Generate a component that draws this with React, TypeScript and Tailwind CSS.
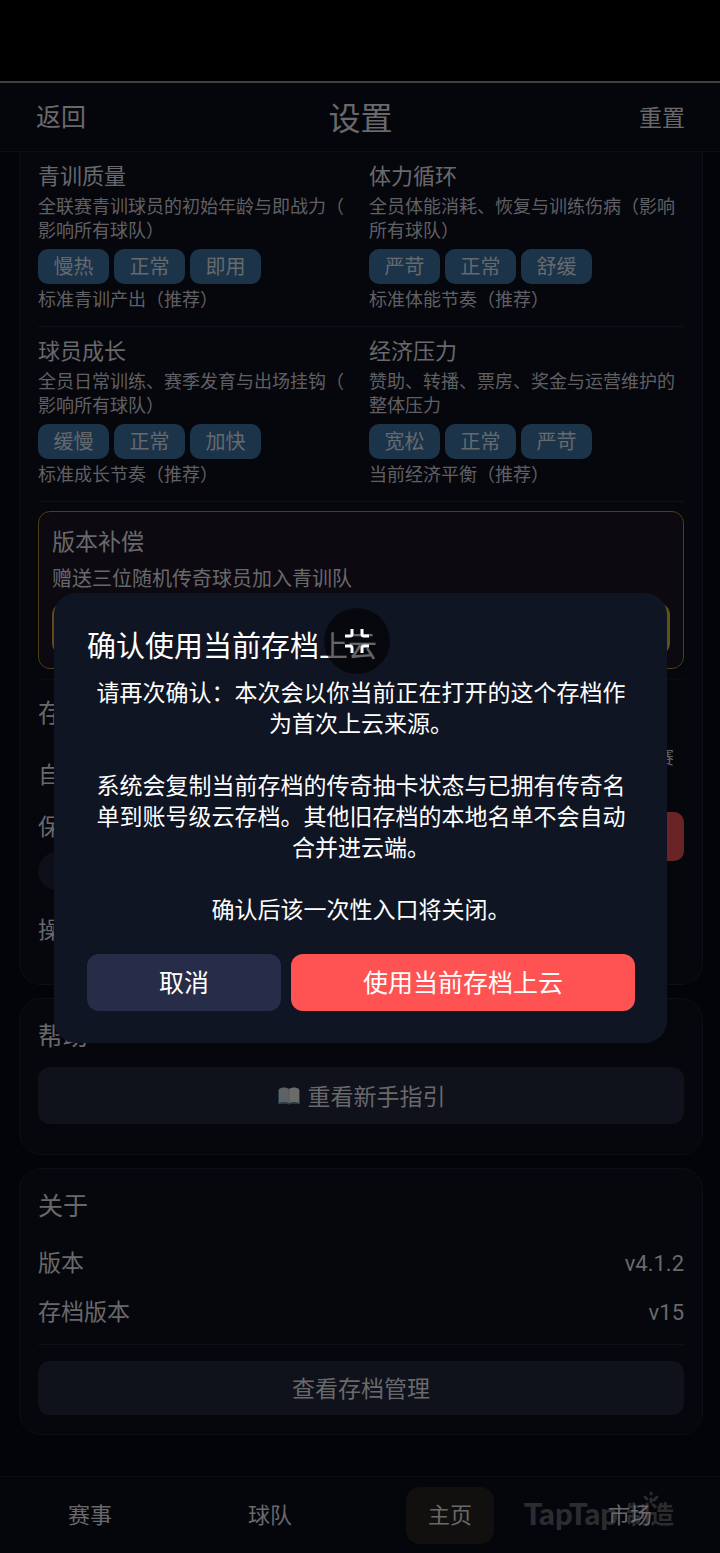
import type { ReactNode } from 'react';

interface Difficulty {
  id: string;
  title: string;
  description: string;
  options: string[];
  note: string;
}

const DIFFICULTY_ROWS: Difficulty[][] = [
  [
    {
      id: 'youth',
      title: '青训质量',
      description: '全联赛青训球员的初始年龄与即战力（影响所有球队）',
      options: ['慢热', '正常', '即用'],
      note: '标准青训产出（推荐）',
    },
    {
      id: 'stamina',
      title: '体力循环',
      description: '全员体能消耗、恢复与训练伤病（影响所有球队）',
      options: ['严苛', '正常', '舒缓'],
      note: '标准体能节奏（推荐）',
    },
  ],
  [
    {
      id: 'growth',
      title: '球员成长',
      description: '全员日常训练、赛季发育与出场挂钩（影响所有球队）',
      options: ['缓慢', '正常', '加快'],
      note: '标准成长节奏（推荐）',
    },
    {
      id: 'economy',
      title: '经济压力',
      description: '赞助、转播、票房、奖金与运营维护的整体压力',
      options: ['宽松', '正常', '严苛'],
      note: '当前经济平衡（推荐）',
    },
  ],
];

const NAV_ITEMS = ['赛事', '球队', '主页', '市场'];

function DifficultyBlock({ item }: { item: Difficulty }) {
  return (
    <section>
      <h3 className="text-[22px] leading-[30px] text-[#69696c]">{item.title}</h3>
      <p className="mt-1 text-[18px] leading-6 text-[#606064] [line-break:anywhere]">{item.description}</p>
      <div className="mt-2 flex gap-[5px]">
        {item.options.map((option) => (
          <button
            key={option}
            type="button"
            className="h-[35px] w-[71px] rounded-[10px] bg-[#1b344a] pb-0.5 text-[20px] leading-6 text-[#666a6e]"
          >
            {option}
          </button>
        ))}
      </div>
      <p className="mt-0.5 text-[18px] leading-6 text-[#606064]">{item.note}</p>
    </section>
  );
}

function Card({ children, className }: { children: ReactNode; className: string }) {
  return (
    <section className={`border border-[#0d0e16] bg-[#06070c] px-[18px] ${className}`}>{children}</section>
  );
}

function BookIcon() {
  return (
    <svg className="h-[18px] w-6" viewBox="0 0 24 18" aria-hidden="true">
      <path d="M1 3h22v14H13.5l-1.5 1-1.5-1H1z" fill="#243a48" />
      <path d="M2 2c3-2 7-2 10 0v14c-3-1.500-7-1.500-10 0z" fill="#5f6264" />
      <path d="M12 2c3-2 7-2 10 0v14c-3-1.500-7-1.500-10 0z" fill="#6b6a68" />
      <path d="M12 2v14" stroke="#55595c" strokeWidth="1" />
    </svg>
  );
}

function Watermark() {
  return (
    <div
      className="pointer-events-none absolute right-[46px] bottom-[22px] flex items-center text-[#2b2c2f]"
      aria-hidden="true"
    >
      <span className="font-[Lato] text-[31px] leading-9 font-black">TapTap</span>
      <span className="ml-2 text-[24px] leading-9 font-bold">制造</span>
      <svg className="absolute -top-1 right-3 size-5" viewBox="0 0 20 20" stroke="currentColor" strokeWidth="3" strokeLinecap="round">
        <path d="M9 2v1M3 6l2 2M15 6l-3 3M9 8v3" />
      </svg>
    </div>
  );
}

function ConfirmDialog() {
  return (
    <div className="absolute inset-0 flex items-center justify-center pt-px pr-[53px] pl-[54px]">
      <div
        role="dialog"
        aria-labelledby="dialog-title"
        className="w-full rounded-[22px] bg-[#101523] pt-[33px] pr-8 pb-8 pl-[33px] text-white"
      >
        <h2 id="dialog-title" className="text-[29px] leading-9">
          确认使用当前存档上云
        </h2>
        <div className="mt-3.5 space-y-[31px] text-center text-[23px] leading-[31px]">
          <p>请再次确认：本次会以你当前正在打开的这个存档作为首次上云来源。</p>
          <p>系统会复制当前存档的传奇抽卡状态与已拥有传奇名单到账号级云存档。其他旧存档的本地名单不会自动合并进云端。</p>
          <p>确认后该一次性入口将关闭。</p>
        </div>
        <div className="mt-[30px] flex gap-2.5 text-[25px]">
          <button type="button" className="h-[57px] w-[194px] rounded-[12px] bg-[#272d48]">
            取消
          </button>
          <button type="button" className="h-[57px] flex-1 rounded-[12px] bg-[#ff5353]">
            使用当前存档上云
          </button>
        </div>
      </div>
    </div>
  );
}

function FloatingButton() {
  return (
    <button
      type="button"
      aria-label="退出全屏"
      className="absolute top-[608px] left-[324px] flex size-[66px] items-center justify-center rounded-full bg-black/60 text-white"
    >
      <svg className="size-[26px]" viewBox="0 0 26 26" fill="none" stroke="currentColor" strokeWidth="3" aria-hidden="true">
        <path d="M8 1v5a2 2 0 0 1-2 2H1M18 1v5a2 2 0 0 0 2 2h5M1 18h5a2 2 0 0 1 2 2v5M25 18h-5a2 2 0 0 0-2 2v5" />
      </svg>
    </button>
  );
}

export default function App() {
  return (
    <div className="relative flex min-h-screen flex-col bg-black font-['Noto_Sans_CJK_SC',sans-serif] text-[#69696c]">
      <div className="h-[81px]" />
      <div className="relative flex flex-1 flex-col bg-[#030408]">
        <header className="grid h-[71px] grid-cols-3 items-center border-t-2 border-b border-t-[#3f4143] border-b-[#0d0e1a] bg-[#05060b] pr-[35px] pb-0.5 pl-9">
          <button type="button" className="justify-self-start text-[25px]">
            返回
          </button>
          <h1 className="text-center text-[32px] leading-10">设置</h1>
          <button type="button" className="justify-self-end text-[23px]">
            重置
          </button>
        </header>

        <main className="flex flex-1 flex-col gap-[13px] pr-[17px] pb-10 pl-[19px]">
          <Card className="rounded-b-[22px] border-t-0 pb-[41px]">
            {DIFFICULTY_ROWS.map((row) => (
              <div key={row[0].id} className="grid grid-cols-2 gap-4 border-b border-[#0f1119] pt-[7px] pb-4">
                {row.map((item) => (
                  <DifficultyBlock key={item.id} item={item} />
                ))}
              </div>
            ))}

            <div className="mt-[9px] rounded-[12px] border border-[#4a3f17] bg-[#0c0911] px-[13px] py-[13px]">
              <h3 className="text-[23px] leading-[30px]">版本补偿</h3>
              <p className="mt-[11px] text-[20px] leading-6">赠送三位随机传奇球员加入青训队</p>
              <button
                type="button"
                aria-label="领取"
                className="mt-[13px] block h-[52px] w-full rounded-[12px] bg-linear-to-r from-[#5f4a18] to-[#5c5518]"
              />
            </div>

            <div className="mt-2.5 border-t border-[#0b0c13] pt-4">
              <h2 className="text-[25px] leading-[30px]">存档</h2>
              <div className="mt-[18px] flex h-[58px] justify-between pr-2.5">
                <span className="self-center text-[23px]">自动</span>
                <span className="text-[18px] leading-6 text-[#606064]">赛</span>
              </div>
              <div className="mt-2 flex items-start justify-between">
                <div>
                  <p className="text-[23px] leading-[30px]">保存</p>
                  <div className="mt-3 h-[38px] w-[76px] rounded-full bg-[#0d0f19]" />
                </div>
                <button type="button" aria-label="上云" className="mt-0.5 block h-[49px] w-[120px] rounded-[10px] bg-[#6b2426]" />
              </div>
              <p className="mt-[23px] text-[23px] leading-[30px]">操作</p>
            </div>
          </Card>

          <Card className="rounded-[22px] pt-5 pb-[30px]">
            <h2 className="text-[25px] leading-[30px]">帮助</h2>
            <button
              type="button"
              className="mt-[18px] flex h-[57px] w-full items-center justify-center gap-[7px] rounded-[12px] bg-[#0f111b] text-[23px]"
            >
              <BookIcon />
              重看新手指引
            </button>
          </Card>

          <Card className="rounded-[22px] pt-5 pb-[19px]">
            <h2 className="text-[25px] leading-[30px]">关于</h2>
            <dl className="mt-[27px] space-y-[19px] text-[23px] leading-[30px]">
              <div className="flex h-[30px] items-baseline justify-between">
                <dt>版本</dt>
                <dd className="font-[Roboto] text-[22px]">v4.1.2</dd>
              </div>
              <div className="flex h-[30px] items-baseline justify-between">
                <dt>存档版本</dt>
                <dd className="font-[Roboto] text-[22px]">v15</dd>
              </div>
            </dl>
            <div className="mt-[19px] border-t border-[#0e1018] pt-4">
              <button type="button" className="block h-[54px] w-full rounded-[12px] bg-[#0f111b] pb-0.5 text-[23px]">
                查看存档管理
              </button>
            </div>
          </Card>
        </main>

        <nav className="relative border-t border-[#0d0e14] bg-[#05060b] pt-2.5 pb-[9px]">
          <Watermark />
          <div className="relative grid grid-cols-4 justify-items-center">
            {NAV_ITEMS.map((label) => (
              <button
                key={label}
                type="button"
                className={`h-[57px] w-[88px] rounded-[14px] pb-1 text-[22px] ${label === '主页' ? 'bg-[#11100e]' : ''}`}
              >
                {label}
              </button>
            ))}
          </div>
        </nav>

        <ConfirmDialog />
      </div>
      <FloatingButton />
    </div>
  );
}
